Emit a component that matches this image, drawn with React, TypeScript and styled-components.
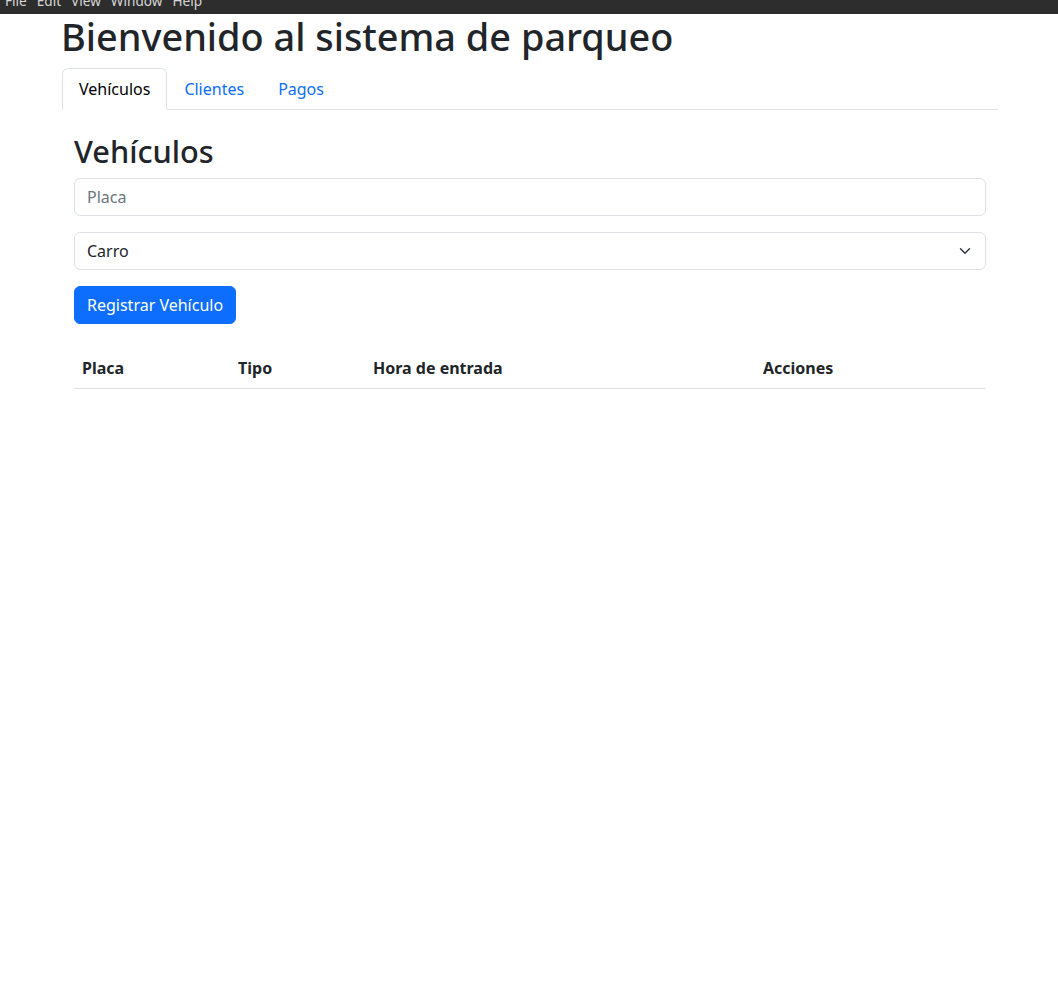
import React, { useState } from "react";
import styled, { createGlobalStyle } from "styled-components";

const GlobalStyle = createGlobalStyle`
  * { box-sizing: border-box; }
  body {
    margin: 0;
    background: #fff;
    color: #212529;
    font-family: "Noto Sans", "Open Sans", sans-serif;
    font-size: 16px;
    line-height: 1.5;
  }
`;

const MenuBar = styled.div`
  height: 14px;
  background: #2d2d2d;
  overflow: hidden;
  display: flex;
`;

const MenuList = styled.div`
  display: flex;
  margin-top: -8px;
`;

const MenuItem = styled.span`
  font-family: "Noto Sans", sans-serif;
  font-size: 13.6px;
  line-height: 18px;
  color: #d6d6d6;
  padding: 0 5px;
`;

const Container = styled.div`
  max-width: 960px;
  margin: 0 auto;
  padding: 0 11px 0 13px;
`;

const Title = styled.h1`
  font-size: calc(1.375rem + 1.5vw);
  font-weight: 500;
  line-height: 1.2;
  margin: 0 0 9px -1px;
`;

const Tabs = styled.ul`
  list-style: none;
  display: flex;
  margin: 0;
  padding: 0;
  border-bottom: 1px solid #dee2e6;
`;

const TabItem = styled.li`
  margin-bottom: -1px;
`;

const TabButton = styled.button<{ $active?: boolean }>`
  font-family: inherit;
  font-size: 16px;
  line-height: 24px;
  padding: 8px 16px;
  background: ${(p) => (p.$active ? "#fff" : "transparent")};
  color: ${(p) => (p.$active ? "#000" : "#0d6efd")};
  border-width: 1px;
  border-style: solid;
  border-color: ${(p) => (p.$active ? "#dee2e6 #dee2e6 #fff" : "transparent")};
  border-top-left-radius: 6px;
  border-top-right-radius: 6px;
  cursor: pointer;
  outline: none;
`;

const Pane = styled.section`
  padding: 23px 12px 0;
`;

const SectionTitle = styled.h2`
  font-size: calc(1.325rem + 0.9vw);
  font-weight: 500;
  line-height: 1.2;
  margin: 0 0 8px;
`;

const Field = styled.div`
  margin-bottom: 16px;
`;

const Input = styled.input`
  display: block;
  width: 100%;
  font-family: inherit;
  font-size: 16px;
  line-height: 24px;
  padding: 6px 12px;
  color: #212529;
  border: 1px solid #dee2e6;
  border-radius: 6px;
  outline: none;
  &::placeholder { color: #6c757d; }
`;

const Select = styled.select`
  display: block;
  width: 100%;
  appearance: none;
  font-family: inherit;
  font-size: 16px;
  line-height: 24px;
  padding: 6px 36px 6px 12px;
  color: #212529;
  background-color: #fff;
  background-image: url("data:image/svg+xml,%3csvg xmlns='http://www.w3.org/2000/svg' viewBox='0 0 16 16'%3e%3cpath fill='none' stroke='%23343a40' stroke-linecap='round' stroke-linejoin='round' stroke-width='2' d='m2 5 6 6 6-6'/%3e%3c/svg%3e");
  background-repeat: no-repeat;
  background-position: right 12px center;
  background-size: 16px 12px;
  border: 1px solid #dee2e6;
  border-radius: 6px;
  outline: none;
`;

const PrimaryButton = styled.button`
  font-family: inherit;
  font-size: 16px;
  line-height: 24px;
  padding: 6px 12px;
  color: #fff;
  background: #0d6efd;
  border: 1px solid #0d6efd;
  border-radius: 6px;
  cursor: pointer;
`;

const Table = styled.table`
  width: 100%;
  margin-top: 24px;
  border-collapse: collapse;
`;

const Th = styled.th<{ $w: number }>`
  width: ${(p) => p.$w}px;
  text-align: left;
  font-weight: 700;
  padding: 8px;
  line-height: 24px;
  color: #212529;
  border-bottom: 1px solid #dee2e6;
`;

const tabs = ["Vehículos", "Clientes", "Pagos"];

export default function App() {
  const [active, setActive] = useState(0);
  const [placa, setPlaca] = useState("");
  const [tipo, setTipo] = useState("Carro");
  return (
    <>
      <GlobalStyle />
      <MenuBar>
        <MenuList>
          {["File", "Edit", "View", "Window", "Help"].map((m) => (
            <MenuItem key={m}>{m}</MenuItem>
          ))}
        </MenuList>
      </MenuBar>
      <Container>
        <Title>Bienvenido al sistema de parqueo</Title>
        <Tabs>
          {tabs.map((t, i) => (
            <TabItem key={t}>
              <TabButton $active={i === active} onClick={() => setActive(i)}>
                {t}
              </TabButton>
            </TabItem>
          ))}
        </Tabs>
        <Pane>
          <SectionTitle>Vehículos</SectionTitle>
          <Field>
            <Input placeholder="Placa" value={placa} onChange={(e) => setPlaca(e.target.value)} />
          </Field>
          <Field>
            <Select value={tipo} onChange={(e) => setTipo(e.target.value)}>
              <option>Carro</option>
              <option>Moto</option>
            </Select>
          </Field>
          <PrimaryButton>Registrar Vehículo</PrimaryButton>
          <Table>
            <thead>
              <tr>
                <Th $w={156}>Placa</Th>
                <Th $w={135}>Tipo</Th>
                <Th $w={390}>Hora de entrada</Th>
                <Th $w={231}>Acciones</Th>
              </tr>
            </thead>
            <tbody />
          </Table>
        </Pane>
      </Container>
    </>
  );
}
